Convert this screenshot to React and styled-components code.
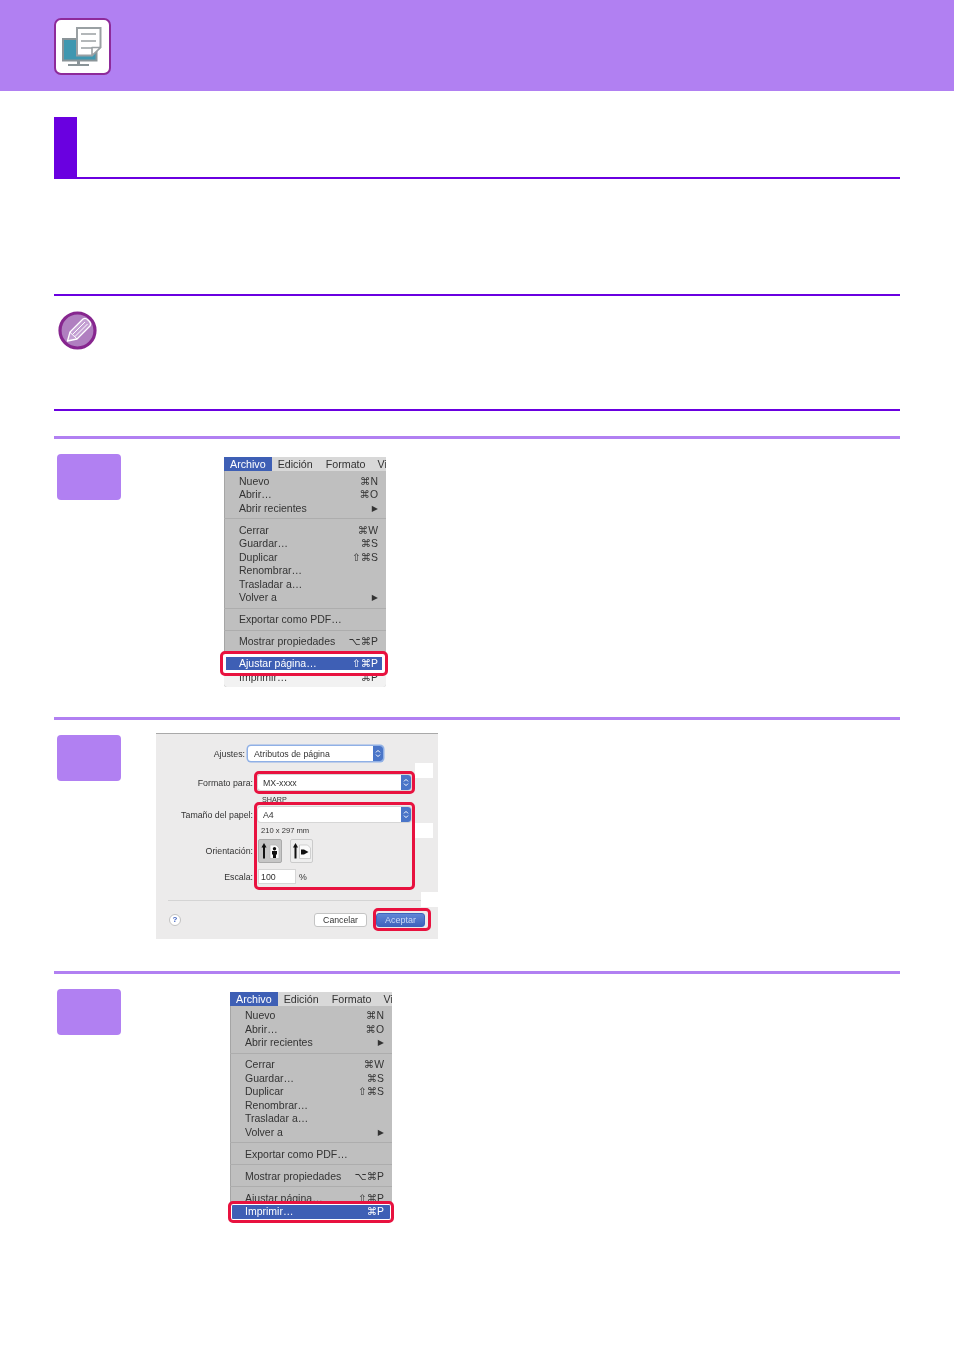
import React from "react"
import styled, { createGlobalStyle } from "styled-components"

const GlobalStyle = createGlobalStyle`
  html, body {
    margin: 0;
    padding: 0;
    background: #fff;
    font-family: "Liberation Sans", "DejaVu Sans", sans-serif;
  }
`

const Page = styled.div`
  width: 954px;
  height: 1350px;
  overflow: hidden;
  background: #fff;
`

const Header = styled.header`
  height: 91px;
  padding: 18px 0 0 54px;
  box-sizing: border-box;
  background: #b180f2;
`

const HeaderIcon = styled.div`
  width: 57px;
  height: 57px;
  box-sizing: border-box;
  border: 2px solid #8e2a9a;
  border-radius: 7px;
  background: #fff;
  svg {
    display: block;
    filter: blur(0.4px);
  }
`

const Content = styled.main`
  margin: 0 54px;
`

const TitleBar = styled.div`
  height: 62px;
  margin-top: 26px;
  box-sizing: border-box;
  border-bottom: 2px solid #6a00e0;
`

const TitleBlock = styled.div`
  width: 23px;
  height: 60px;
  background: #6a00e0;
`

const Note = styled.section`
  height: 117px;
  margin-top: 115px;
  padding: 15px 0 0 4px;
  box-sizing: border-box;
  border-top: 2px solid #6a00e0;
  border-bottom: 2px solid #6a00e0;
  svg {
    display: block;
    filter: blur(0.3px);
  }
`

const Step = styled.section`
  display: flex;
  height: ${p => p.$height}px;
  margin-top: ${p => p.$first ? 25 : 0}px;
  box-sizing: border-box;
  border-top: 3px solid #b180f2;
`

const Badge = styled.div`
  flex: none;
  width: 64px;
  height: 46px;
  margin: 15px 0 0 3px;
  border-radius: 4px;
  background: #b180f2;
`

const Figure = styled.div`
  position: relative;
  margin: ${p => p.$top}px 0 0 ${p => p.$indent}px;
`

const MenuFrame = styled.div`
  width: 162px;
  height: 230px;
  overflow: hidden;
  background: #bfbfbf;
  box-sizing: border-box;
  box-shadow: inset 1px 0 #a5a5a5;
  border-radius: 0 0 3px 3px;
  color: #333;
  font-size: 10.5px;
  filter: blur(0.45px);
  &::after {
    content: "";
    display: block;
    height: 6px;
    background: #f2f2f2;
  }
`

const MenuBar = styled.div`
  display: flex;
  height: 14px;
  background: #d8d8d8;
  font-size: 10.7px;
  line-height: 14px;
  white-space: nowrap;
  margin-bottom: 3.5px;
`

const BarItem = styled.span`
  flex: none;
  padding: ${p => p.$tight ? "0 0 0 5px" : "0 6px"};
  margin-right: ${p => p.$active ? 0 : 1}px;
  color: ${p => p.$active ? "#fff" : "#333"};
  background: ${p => p.$active ? "#3e5fb5" : "transparent"};
`

const MenuRow = styled.div`
  display: flex;
  justify-content: space-between;
  height: 13.5px;
  line-height: 13.5px;
  padding: 0 8px 0 15px;
  color: ${p => p.$active ? "#fff" : "inherit"};
  background: ${p => p.$active ? "#3e5fb5" : p.$tail ? "#f2f2f2" : "transparent"};
`

const Shortcut = styled.span`
  font-size: ${p => p.$arrow ? 8 : 10.4}px;
`

const MenuSeparator = styled.div`
  height: 8.5px;
  position: relative;
  &::after {
    content: "";
    position: absolute;
    left: 0;
    right: 0;
    top: 3px;
    height: 1px;
    background: #adadad;
  }
`

const Callout = styled.div`
  position: absolute;
  box-sizing: border-box;
  left: ${p => p.$x}px;
  top: ${p => p.$y}px;
  width: ${p => p.$w}px;
  height: ${p => p.$h}px;
  border: 3px solid #e8123f;
  border-radius: 5px;
  box-shadow: inset 0 0 0 ${p => p.$inset || 0}px #fff;
`

const Dialog = styled.div`
  width: 282px;
  height: 206px;
  padding-top: 12px;
  box-sizing: border-box;
  background: #ecebeb;
  border-top: 1px solid #a9a9a9;
  color: #333;
  font-size: 8.8px;
  filter: blur(0.35px);
`

const FormRow = styled.div`
  display: flex;
  align-items: center;
  height: ${p => p.$height || 15}px;
  margin-top: ${p => p.$gap || 0}px;
`

const FieldLabel = styled.span`
  flex: none;
  width: ${p => p.$width || 97}px;
  margin-right: ${p => p.$space || 5}px;
  text-align: right;
  white-space: nowrap;
`

const Select = styled.div`
  display: flex;
  align-items: center;
  justify-content: space-between;
  width: ${p => p.$width}px;
  height: 100%;
  box-sizing: border-box;
  padding-left: ${p => p.$focus ? 6 : 5}px;
  background: #fff;
  border-radius: 3px;
  overflow: hidden;
  box-shadow: ${p => p.$focus ? "0 0 0 1.5px #8fb0e6" : "0 0 0 1px #d6d6d6"};
`

const Stepper = styled.span`
  flex: none;
  display: flex;
  align-items: center;
  justify-content: center;
  width: 10px;
  height: 100%;
  background: #4a75c8;
  svg {
    display: block;
  }
`

const SmallText = styled.span`
  padding-left: ${p => p.$indent}px;
  font-size: ${p => p.$size}px;
  color: #333;
`

const OrientButton = styled.div`
  display: flex;
  align-items: center;
  justify-content: center;
  width: ${p => p.$selected ? 24 : 23}px;
  height: 24px;
  margin-right: ${p => p.$selected ? 8 : 0}px;
  box-sizing: border-box;
  border: 1px solid ${p => p.$selected ? "#aaa" : "#cbcbcb"};
  border-radius: 2px;
  background: ${p => p.$selected ? "#c6c6c6" : "#eeeeee"};
`

const ScaleInput = styled.div`
  width: 38px;
  height: 100%;
  margin-right: 3px;
  padding-left: 2px;
  box-sizing: border-box;
  line-height: 14px;
  background: #fff;
  border: 1px solid #d6d6d6;
`

const Divider = styled.div`
  height: 1px;
  margin: 16px 0 0 12px;
  background: #d4d4d4;
`

const Footer = styled.div`
  display: flex;
  align-items: center;
  justify-content: space-between;
  height: 14px;
  margin-top: 12px;
  padding: 0 13px;
`

const HelpButton = styled.div`
  width: 12px;
  height: 12px;
  box-sizing: border-box;
  border: 1px solid #c2c2c2;
  border-radius: 50%;
  background: #fff;
  color: #3f62c0;
  font-size: 8px;
  font-weight: bold;
  line-height: 10px;
  text-align: center;
`

const Buttons = styled.div`
  display: flex;
  gap: 9px;
`

const DialogButton = styled.div`
  width: ${p => p.$width}px;
  height: 14px;
  box-sizing: border-box;
  border-radius: 3px;
  font-size: ${p => p.$primary ? 9 : 8.7}px;
  line-height: 12px;
  text-align: center;
  color: ${p => p.$primary ? "#c9d8f5" : "#333"};
  background: ${p => p.$primary ? "linear-gradient(#5f86d6, #3f63bd)" : "#fff"};
  border: 1px solid ${p => p.$primary ? "#3f63bd" : "#c4c4c4"};
`

const Patch = styled.div`
  position: absolute;
  left: ${p => p.$x}px;
  top: ${p => p.$y}px;
  width: 18px;
  height: 15px;
  background: #fff;
`

const fileMenu = [
  { label: "Nuevo", hint: "⌘N" },
  { label: "Abrir…", hint: "⌘O" },
  { label: "Abrir recientes", arrow: true },
  { sep: true },
  { label: "Cerrar", hint: "⌘W" },
  { label: "Guardar…", hint: "⌘S" },
  { label: "Duplicar", hint: "⇧⌘S" },
  { label: "Renombrar…" },
  { label: "Trasladar a…" },
  { label: "Volver a", arrow: true },
  { sep: true },
  { label: "Exportar como PDF…" },
  { sep: true },
  { label: "Mostrar propiedades", hint: "⌥⌘P" },
  { sep: true },
  { label: "Ajustar página…", hint: "⇧⌘P" },
  { label: "Imprimir…", hint: "⌘P", tail: true },
]

const FileMenu = ({ active }) => (
  <MenuFrame>
    <MenuBar>
      <BarItem $active>Archivo</BarItem>
      <BarItem>Edición</BarItem>
      <BarItem>Formato</BarItem>
      <BarItem $tight>Vi</BarItem>
    </MenuBar>
    {fileMenu.map((item, index) =>
      item.sep ? (
        <MenuSeparator key={index} />
      ) : (
        <MenuRow key={item.label} $active={item.label === active} $tail={item.tail}>
          <span>{item.label}</span>
          {item.arrow ? <Shortcut $arrow>▶</Shortcut> : null}
          {item.hint ? <Shortcut>{item.hint}</Shortcut> : null}
        </MenuRow>
      )
    )}
  </MenuFrame>
)

const MonitorIcon = () => (
  <svg width="53" height="53" viewBox="0 0 53 53">
    <rect x="7" y="19" width="33.5" height="21.5" fill="#3f97b0" stroke="#8a9498" strokeWidth="2" />
    <rect x="21" y="41" width="3" height="4" fill="#8a9498" />
    <rect x="12" y="44" width="21" height="2" fill="#8a9498" />
    <path d="M21 8 H44.5 V27 L36 35.5 H21 Z" fill="#fff" stroke="#9aa0a3" strokeWidth="2" />
    <path d="M36 35.5 V27.5 H44.5 Z" fill="#fff" stroke="#9aa0a3" strokeWidth="1.6" strokeLinejoin="round" />
    <path d="M25 14 H40 M25 21 H40 M25 28 H36" stroke="#9aa0a3" strokeWidth="1.7" />
  </svg>
)

const PencilIcon = () => (
  <svg width="40" height="40" viewBox="0 0 40 40">
    <circle cx="19.5" cy="19.5" r="17.5" fill="#b07fc0" stroke="#87268f" strokeWidth="3.2" />
    <path d="M9.5 30 L12 21 L25 8 Q27.5 6.5 30 9 L31.5 10.5 Q33.5 13 32 15 L19 28 Z" fill="#c39fd2" stroke="#fff" strokeWidth="1.3" strokeLinejoin="round" />
    <path d="M14.5 23.5 L27 11 M17 25.5 L29.5 13" stroke="#fff" strokeWidth="1" />
    <path d="M12 21 Q13 23 14.5 23.5 Q15.5 25.5 17 25.5 Q17.5 27 19 28" fill="none" stroke="#fff" strokeWidth="1" />
  </svg>
)

const StepperIcon = () => (
  <svg width="6" height="9" viewBox="0 0 6 9">
    <path d="M1 3.4 L3 1.4 L5 3.4 M1 5.6 L3 7.6 L5 5.6" fill="none" stroke="#fff" strokeWidth="1" />
  </svg>
)

const PortraitIcon = () => (
  <svg width="20" height="18" viewBox="0 0 20 18">
    <path d="M4 16.5 V4" stroke="#111" strokeWidth="2" />
    <path d="M1.5 5.5 L4 1 L6.5 5.5 Z" fill="#111" />
    <path d="M10 3 H16 L19 6 V16.5 H10 Z" fill="#fafafa" stroke="#b5b5b5" strokeWidth="0.7" />
    <circle cx="14.5" cy="6.8" r="1.7" fill="#111" />
    <path d="M12 9 H17 V12.5 H16 V16 H13 V12.5 H12 Z" fill="#111" />
  </svg>
)

const LandscapeIcon = () => (
  <svg width="20" height="18" viewBox="0 0 20 18">
    <path d="M3.5 16.5 V4" stroke="#111" strokeWidth="2" />
    <path d="M1 5.5 L3.5 1 L6 5.5 Z" fill="#111" />
    <path d="M7.5 3 H15.5 L18.5 6 V16.5 H7.5 Z" fill="#fafafa" stroke="#c0c0c0" strokeWidth="0.7" />
    <path d="M9 7.5 H12 L16.5 10 L12 12.5 H9 Z" fill="#111" />
  </svg>
)

const PageSetupDialog = () => (
  <Dialog>
    <FormRow>
      <FieldLabel $width={89} $space={3}>Ajustes:</FieldLabel>
      <Select $width={135} $focus>
        Atributos de página
        <Stepper><StepperIcon /></Stepper>
      </Select>
    </FormRow>
    <FormRow $gap={14}>
      <FieldLabel>Formato para:</FieldLabel>
      <Select $width={153}>
        MX-xxxx
        <Stepper><StepperIcon /></Stepper>
      </Select>
    </FormRow>
    <FormRow $gap={5} $height={8}>
      <FieldLabel />
      <SmallText $indent={4} $size={7.2}>SHARP</SmallText>
    </FormRow>
    <FormRow $gap={4}>
      <FieldLabel>Tamaño del papel:</FieldLabel>
      <Select $width={153}>
        A4
        <Stepper><StepperIcon /></Stepper>
      </Select>
    </FormRow>
    <FormRow $gap={3} $height={10}>
      <FieldLabel />
      <SmallText $indent={3} $size={7.6}>210 x 297 mm</SmallText>
    </FormRow>
    <FormRow $gap={4} $height={24}>
      <FieldLabel>Orientación:</FieldLabel>
      <OrientButton $selected><PortraitIcon /></OrientButton>
      <OrientButton><LandscapeIcon /></OrientButton>
    </FormRow>
    <FormRow $gap={6}>
      <FieldLabel>Escala:</FieldLabel>
      <ScaleInput>100</ScaleInput>
      %
    </FormRow>
    <Divider />
    <Footer>
      <HelpButton>?</HelpButton>
      <Buttons>
        <DialogButton $width={53}>Cancelar</DialogButton>
        <DialogButton $width={49} $primary>Aceptar</DialogButton>
      </Buttons>
    </Footer>
  </Dialog>
)

export default function App() {
  return (
    <Page>
      <GlobalStyle />
      <Header>
        <HeaderIcon>
          <MonitorIcon />
        </HeaderIcon>
      </Header>
      <Content>
        <TitleBar>
          <TitleBlock />
        </TitleBar>
        <Note>
          <PencilIcon />
        </Note>
        <Step $first $height={281}>
          <Badge />
          <Figure $top={18} $indent={103}>
            <FileMenu active="Ajustar página…" />
            <Callout $x={-4} $y={194} $w={168} $h={25} $inset={3} />
          </Figure>
        </Step>
        <Step $height={254}>
          <Badge />
          <Figure $top={13} $indent={35}>
            <PageSetupDialog />
            <Patch $x={259} $y={30} />
            <Patch $x={259} $y={90} />
            <Patch $x={265} $y={159} />
            <Callout $x={98} $y={38} $w={161} $h={23} />
            <Callout $x={98} $y={69} $w={161} $h={88} />
            <Callout $x={217} $y={175} $w={58} $h={23} />
          </Figure>
        </Step>
        <Step $height={300}>
          <Badge />
          <Figure $top={17.5} $indent={109}>
            <FileMenu active="Imprimir…" />
            <Callout $x={-2} $y={209.5} $w={166} $h={22} $inset={1} />
          </Figure>
        </Step>
      </Content>
    </Page>
  )
}
